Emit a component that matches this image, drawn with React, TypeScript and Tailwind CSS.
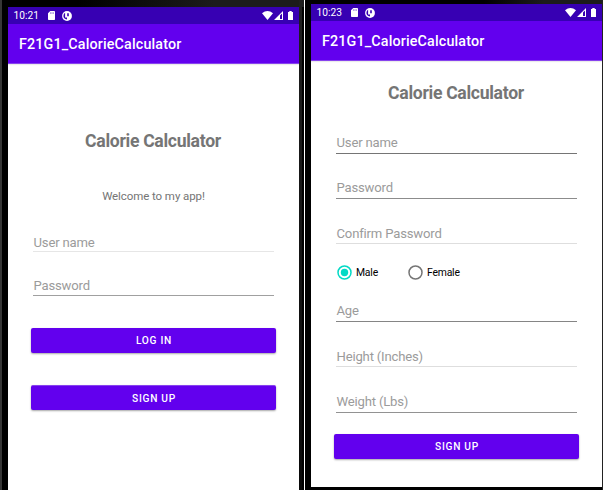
import type { ReactNode } from "react";

function StatusBar({ time }: { time: string }) {
  return (
    <div className="flex h-[17px] shrink-0 items-center bg-[#3700b3] pl-[5.5px] pr-[6px] text-white">
      <span className="w-[34.5px] text-[10.2px] leading-[17px]">{time}</span>
      <svg className="h-[9px] w-[7px]" viewBox="0 0 7 9">
        <path d="M2.3 0H6.3Q7 0 7 .7V8.3Q7 9 6.3 9H.7Q0 9 0 8.3V2.3Z" fill="#fff" />
        <path d="M2.6 1.3V2.8M4 1.3V2.8M5.4 1.3V2.8" stroke="#3700b3" strokeWidth=".5" />
      </svg>
      <svg className="ml-[7px] h-[10px] w-[10px]" viewBox="0 0 10 10">
        <circle cx="5" cy="5" r="4.9" fill="#fff" />
        <path d="M3.1 1.8V6.6H5V8.4Q1.4 8 1.4 5Q1.4 2.8 3.1 1.8Z" fill="#3700b3" />
        <path d="M5.2 2.3H6.8V5.2H5.2Z" fill="#3700b3" />
      </svg>
      <svg className="ml-auto h-[9px] w-[11px]" viewBox="0 0 11 9">
        <path d="M0 2.2Q5.5-2 11 2.2L5.5 9Z" fill="#fff" />
      </svg>
      <svg className="ml-px h-[9px] w-[9px]" viewBox="0 0 9 9">
        <path d="M9 0V9H0ZM8 2.4L6 4.4V8H8Z" fill="#fff" fillRule="evenodd" />
      </svg>
      <svg className="ml-[5px] h-[9px] w-[5px]" viewBox="0 0 5 9">
        <path d="M1.3 0H3.7V1H5V9H0V1H1.3Z" fill="#fff" />
      </svg>
    </div>
  );
}

function Screen({ time, children }: { time: string; children: ReactNode }) {
  return (
    <div className="flex min-h-0 w-[291px] flex-1 flex-col bg-white">
      <StatusBar time={time} />
      <header className="h-10 shrink-0 border-b border-[#8742ee] bg-[#6200ee] pl-[11px] text-[14.3px] font-medium leading-[40px] tracking-[0.16px] text-white shadow-[0_1px_1px_rgba(0,0,0,0.08)]">
        F21G1_CalorieCalculator
      </header>
      {children}
    </div>
  );
}

function Title() {
  return (
    <h1 className="h-6 shrink-0 pr-px text-center text-[17.6px] font-bold leading-6 tracking-[-0.3px] text-[#757575]">
      Calorie Calculator
    </h1>
  );
}

function Field({ label, className }: { label: string; className: string }) {
  return (
    <div
      className={`ml-[25px] h-[20px] w-[241px] shrink-0 border-b pl-[0.5px] text-[13.1px] tracking-[-0.18px] text-[#9b9b9b] ${className}`}
    >
      {label}
    </div>
  );
}

function Button({ label, className }: { label: string; className: string }) {
  return (
    <button
      className={`ml-[23px] block h-[25px] w-[245px] shrink-0 rounded-[2px] bg-[#6200ee] pl-px text-center text-[10.2px] font-medium leading-[25px] tracking-[0.72px] text-white shadow-[0_1px_2px_rgba(0,0,0,0.35)] ${className}`}
    >
      {label}
    </button>
  );
}

function Radio({ label, checked }: { label: string; checked?: boolean }) {
  return (
    <label className="flex w-[71px] items-center text-[10.4px] leading-[17px] tracking-[-0.2px] text-black">
      <svg className="mr-[4px] h-[15px] w-[15px]" viewBox="0 0 15 15">
        <circle cx="7.5" cy="7.5" r="6.5" fill="none" stroke={checked ? "#03dac5" : "#757575"} strokeWidth="1.5" />
        {checked && <circle cx="7.5" cy="7.5" r="3.7" fill="#03dac5" />}
      </svg>
      {label}
    </label>
  );
}

export default function App() {
  return (
    <main className="flex h-[490px] w-[603px] overflow-hidden bg-white font-['Roboto',sans-serif]">
      <section className="flex w-[304px] shrink-0 border-l-2 border-[#373737] bg-black bg-[linear-gradient(90deg,#000_25%,#1c1c1c_70%)] bg-[length:100%_7px] bg-no-repeat">
        <div className="w-[6px] shrink-0 bg-black" />
        <div className="flex w-[291px] shrink-0 flex-col pt-[7px]">
          <Screen time="10:21">
            <div className="h-[65px] shrink-0" />
            <Title />
            <p className="mt-[33px] h-5 shrink-0 text-center text-[11.5px] leading-5 tracking-[-0.08px] text-[#757575]">
              Welcome to my app!
            </p>
            <Field label="User name" className="mt-[26px] leading-[21px] border-[#e6e6e6]" />
            <Field label="Password" className="mt-[24px] leading-[19px] border-[#a0a0a0]" />
            <Button label="LOG IN" className="mt-[32px]" />
            <Button label="SIGN UP" className="mt-[32px] border-t border-[#8742ee] leading-[24px]" />
          </Screen>
        </div>
        <div className="w-[3px] shrink-0 bg-linear-to-b from-[#1f1f1f] to-[#090909]" />
      </section>
      <section className="ml-px flex w-[298px] shrink-0 bg-black bg-[linear-gradient(90deg,#000_60%,#1c1c1c_80%)] bg-[length:100%_4px] bg-no-repeat">
        <div className="w-[6px] shrink-0" />
        <div className="flex w-[291px] shrink-0 flex-col pb-[3px] pt-[4px]">
          <Screen time="10:23">
            <div className="h-[20px] shrink-0" />
            <Title />
            <Field label="User name" className="mt-[29px] leading-[17px] border-[#757575]" />
            <Field label="Password" className="mt-[25px] leading-[17px] border-[#8c8c8c]" />
            <Field label="Confirm Password" className="mt-[25px] leading-[19px] border-[#dedede]" />
            <div className="ml-[26px] mt-[20px] flex h-4 shrink-0">
              <Radio label="Male" checked />
              <Radio label="Female" />
            </div>
            <Field label="Age" className="mt-[22px] leading-[17px] border-[#858585]" />
            <Field label="Height (Inches)" className="mt-[25px] leading-[19px] border-[#dedede]" />
            <Field label="Weight (Lbs)" className="mt-[26px] leading-[17px] border-[#929292]" />
            <Button label="SIGN UP" className="mt-[21px]" />
          </Screen>
        </div>
        <div className="w-px shrink-0 bg-[#222]" />
      </section>
    </main>
  );
}
